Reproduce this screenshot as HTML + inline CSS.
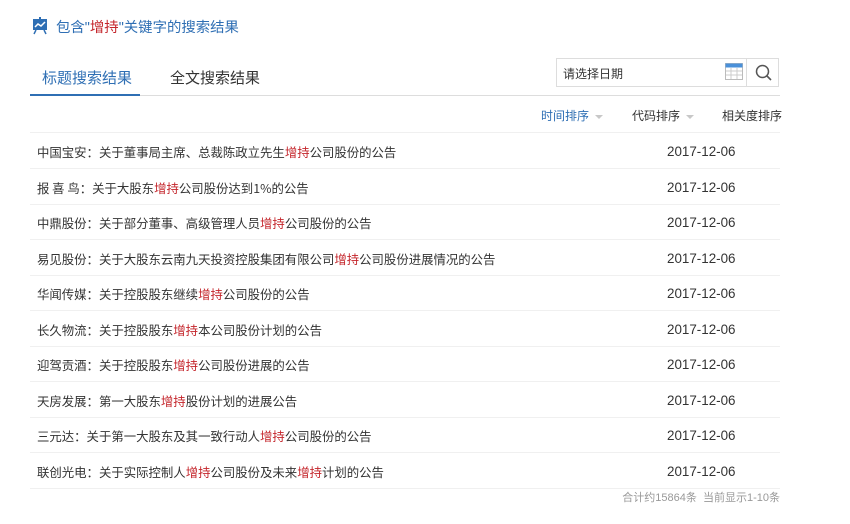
<!DOCTYPE html>
<html><head><meta charset="utf-8"><style>
body{margin:0;width:850px;height:524px;background:#fff;font-family:"Liberation Sans","Noto Sans CJK SC",sans-serif;position:relative;overflow:hidden;color:#333}
.a{position:absolute;white-space:nowrap}
.r{color:#c4252b}
.row{position:absolute;left:30px;width:750px;height:35px;border-bottom:1px solid #f0f0f0;font-size:12px}
.row span.t{position:absolute;left:7px;top:11px;line-height:16px;font-family:"Noto Sans CJK SC",sans-serif;font-size:12.4px}
.row span.d{position:absolute;left:637px;top:11px;line-height:16px;font-size:13.4px}
.tri{display:inline-block;width:0;height:0;border-left:4px solid transparent;border-right:4px solid transparent;border-top:4px solid #c8c8c8;margin-left:6px;vertical-align:middle}
</style></head><body>
<svg class="a" style="left:32px;top:17px" width="16" height="18" viewBox="0 0 16 18"><rect x="7" y="0" width="2" height="3" fill="#2f6fb4"/><rect x="1" y="2" width="14" height="11" fill="#2f6fb4"/><polyline points="3,10 6,7 9,9 13,5" stroke="#fff" stroke-width="1.5" fill="none"/><line x1="4" y1="13" x2="2" y2="17" stroke="#2f6fb4" stroke-width="1.5"/><line x1="12" y1="13" x2="14" y2="17" stroke="#2f6fb4" stroke-width="1.5"/></svg>
<div class="a" style="left:56px;top:16px;font-size:14.4px;color:#2f6fb4">包含"<span class="r">增持</span>"关键字的搜索结果</div>
<div class="a" style="left:42px;top:67px;font-size:15px;color:#2f6fb4">标题搜索结果</div>
<div class="a" style="left:170px;top:67px;font-size:15px;color:#333">全文搜索结果</div>
<div class="a" style="left:30px;top:95px;width:750px;height:1px;background:#ddd"></div>
<div class="a" style="left:30px;top:94px;width:110px;height:2px;background:#2f6fb4"></div>
<div class="a" style="left:556px;top:58px;width:223px;height:29px;border:1px solid #ddd;box-sizing:border-box"></div>
<div class="a" style="left:746px;top:58px;width:1px;height:29px;background:#ddd"></div>
<div class="a" style="left:563px;top:65px;font-size:12px;color:#333">请选择日期</div>
<svg class="a" style="left:725px;top:63px" width="18" height="17"><rect x="0.5" y="0.5" width="17" height="16" fill="#fff" stroke="#bbb"/><rect x="0.5" y="0.5" width="17" height="4" fill="#4a90d9"/><g stroke="#ccc"><line x1="1" y1="8" x2="17" y2="8"/><line x1="1" y1="12" x2="17" y2="12"/><line x1="6" y1="5" x2="6" y2="16"/><line x1="12" y1="5" x2="12" y2="16"/></g></svg>
<svg class="a" style="left:755px;top:64px" width="18" height="18"><circle cx="7.5" cy="7.5" r="6" stroke="#555" stroke-width="1.5" fill="none"/><line x1="12" y1="12" x2="16" y2="16" stroke="#555" stroke-width="1.6"/></svg>
<div class="a" style="left:541px;top:107px;font-size:12px;color:#2f6fb4">时间排序<span class="tri"></span></div>
<div class="a" style="left:632px;top:107px;font-size:12px;color:#333">代码排序<span class="tri"></span></div>
<div class="a" style="left:722px;top:107px;font-size:12px;color:#333">相关度排序</div>
<div class="a" style="left:30px;top:132px;width:750px;height:1px;background:#f0f0f0"></div>
<div class="row" style="top:133px"><span class="t">中国宝安：关于董事局主席、总裁陈政立先生<span class="r">增持</span>公司股份的公告</span><span class="d">2017-12-06</span></div>
<div class="row" style="top:169px"><span class="t">报 喜 鸟：关于大股东<span class="r">增持</span>公司股份达到1%的公告</span><span class="d">2017-12-06</span></div>
<div class="row" style="top:204px"><span class="t">中鼎股份：关于部分董事、高级管理人员<span class="r">增持</span>公司股份的公告</span><span class="d">2017-12-06</span></div>
<div class="row" style="top:240px"><span class="t">易见股份：关于大股东云南九天投资控股集团有限公司<span class="r">增持</span>公司股份进展情况的公告</span><span class="d">2017-12-06</span></div>
<div class="row" style="top:275px"><span class="t">华闻传媒：关于控股股东继续<span class="r">增持</span>公司股份的公告</span><span class="d">2017-12-06</span></div>
<div class="row" style="top:311px"><span class="t">长久物流：关于控股股东<span class="r">增持</span>本公司股份计划的公告</span><span class="d">2017-12-06</span></div>
<div class="row" style="top:346px"><span class="t">迎驾贡酒：关于控股股东<span class="r">增持</span>公司股份进展的公告</span><span class="d">2017-12-06</span></div>
<div class="row" style="top:382px"><span class="t">天房发展：第一大股东<span class="r">增持</span>股份计划的进展公告</span><span class="d">2017-12-06</span></div>
<div class="row" style="top:417px"><span class="t">三元达：关于第一大股东及其一致行动人<span class="r">增持</span>公司股份的公告</span><span class="d">2017-12-06</span></div>
<div class="row" style="top:453px"><span class="t">联创光电：关于实际控制人<span class="r">增持</span>公司股份及未来<span class="r">增持</span>计划的公告</span><span class="d">2017-12-06</span></div>
<div class="a" style="right:70px;top:489px;font-size:11px;color:#999">合计约15864条&nbsp;&nbsp;当前显示1-10条</div>
</body></html>
